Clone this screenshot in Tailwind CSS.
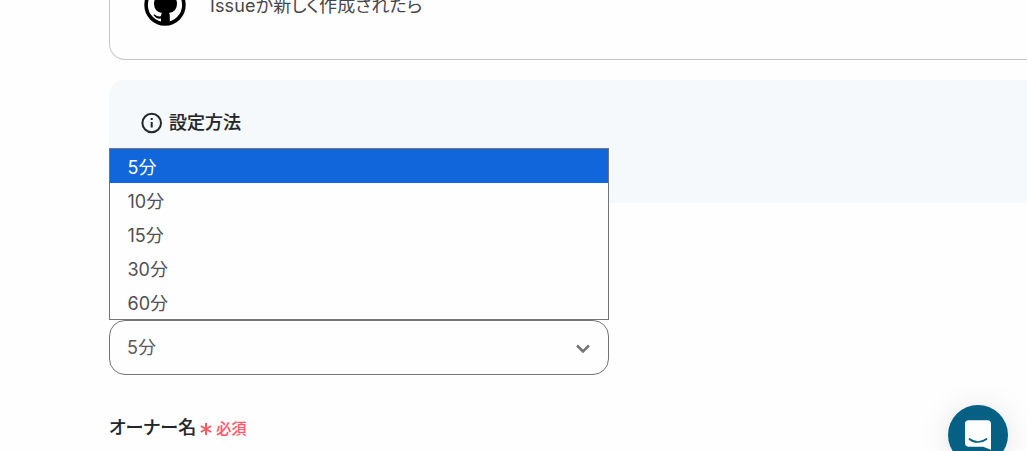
<!DOCTYPE html>
<html lang="ja">
<head>
  <meta charset="UTF-8">
  <meta name="viewport" content="width=device-width, initial-scale=1.0">
  <title>設定方法</title>
  <script src="https://cdn.jsdelivr.net/npm/@tailwindcss/browser@4"></script>
  <style>
    body { font-family: Inter, 'Noto Sans CJK JP', sans-serif; font-feature-settings: 'palt'; }
    .semi { -webkit-text-stroke: 0.15px currentColor; }
  </style>
</head>
<body class="h-[451px] overflow-hidden bg-[#fefefe] text-[#242528]">
  <main class="ml-[109px] w-[960px]">
    <section class="flex h-[60px] items-start rounded-b-2xl border border-t-0 border-[#c8c5ca] pl-[34px]">
      <svg class="-mt-4 size-[42px] shrink-0" viewBox="0 0 42 42">
        <circle cx="21" cy="21" r="18.9" fill="#fff" stroke="#000" stroke-width="3.6"/>
        <path d="M11 9l5 2.2q5-1.2 10 0L31 9q1.3 3 .4 5.5 1.6 2 1.6 5 0 8.5-8 9.5.8 1 .8 3V40h-8.800v-5.500c-4.600.8-5.600-1.500-7.600-3.500l.6-.8c2 .8 3.500 2.800 7 2.100q0-2.300 1-3.300-8-1-8-9.500 0-3 1.600-5Q9.700 12 11 9z"/>
      </svg>
      <p class="ml-6 -mt-2 text-[18px]/[27px] tracking-[0.1px] text-[#47464a]">Issueが新しく作成されたら</p>
    </section>

    <section class="mt-5 h-[123px] rounded-2xl bg-[#f5f9fc] pt-[29px] pl-8">
      <h2 class="semi flex items-center gap-[6px] text-[18px]/[27px] font-medium">
        <svg class="size-[22px]" viewBox="0 0 22 22" fill="none" stroke="currentColor" stroke-width="2">
          <circle cx="10.700" cy="11" r="9.300"/>
          <path d="M10.700 10v5.500M10.700 6v2"/>
        </svg>
        設定方法
      </h2>
    </section>

    <div class="relative mt-[117px] w-[500px]">
      <ul class="absolute bottom-full left-0 h-[172px] w-[500px] border border-[#767377] bg-[#fefefe] text-[18px] text-[#504f54]">
        <li class="flex h-[34px] items-center bg-[#1266dc] pt-[3px] pl-[17.5px] text-white">5分</li>
        <li class="flex h-[34px] items-center pt-[3px] pl-[17.5px]">10分</li>
        <li class="flex h-[34px] items-center pt-[3px] pl-[17.5px]">15分</li>
        <li class="flex h-[34px] items-center pt-[3px] pl-[17.5px]">30分</li>
        <li class="flex h-[34px] items-center pt-[3px] pl-[17.5px]">60分</li>
      </ul>
      <button class="flex h-[55px] w-full items-center justify-between rounded-2xl border border-[#767377] pr-[18px] pl-[17px] text-[18px] text-[#5b5a5f]">
        5分
        <svg class="mt-[3px] h-[10px] w-[14px]" viewBox="0 0 14 10" fill="none" stroke="#767377" stroke-width="2.500">
          <path d="M1 1.500l6 6 6-6"/>
        </svg>
      </button>
    </div>

    <label class="semi mt-[39px] flex items-center text-[18px]/[27px] font-medium">
      オーナー名
      <svg class="mt-[3px] ml-[4px] size-3" viewBox="0 0 12 12" stroke="#ff5967" stroke-width="2">
        <path d="M6 0v12M.8 3l10.400 6M11.200 3L.8 9"/>
      </svg>
      <span class="mt-[2px] ml-1 text-[15px]/[20px] tracking-[0.3px] text-[#ff5967]">必須</span>
    </label>
  </main>

  <button class="absolute top-[405px] left-[948px] flex size-[60px] items-center justify-center rounded-full bg-[#056084] shadow-[0_1px_6px_rgba(0,0,0,0.04),0_2px_32px_rgba(0,0,0,0.10)]">
    <svg class="h-[30px] w-[26px]" viewBox="0 0 28 32">
      <path fill="#fff" d="M28 32s-4.714-1.855-8.527-3.340H3.437C1.540 28.660 0 27.026 0 25.013V3.644C0 1.633 1.540 0 3.437 0h21.125c1.898 0 3.437 1.632 3.437 3.645v18.404H28V32z"/>
      <path fill="none" stroke="#056084" stroke-width="1.800" stroke-linecap="round" d="M4.800 20.300c5.300 4.300 13 4.300 18.400 0"/>
    </svg>
  </button>
</body>
</html>
